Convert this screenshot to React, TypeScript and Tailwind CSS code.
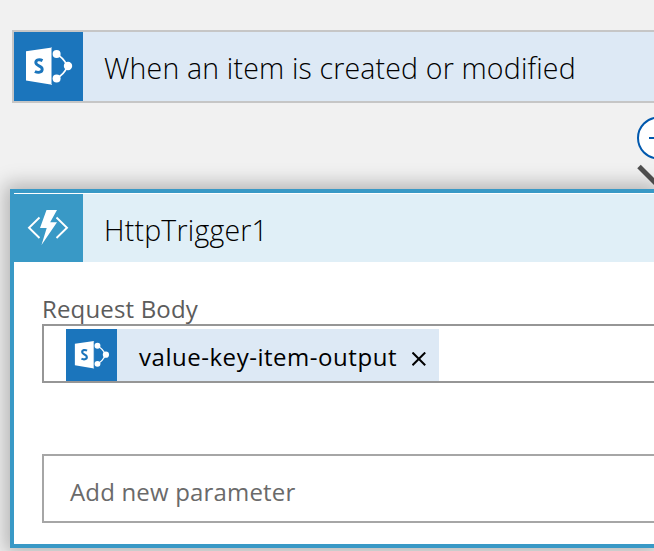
import type { ReactNode } from "react";

function SharePointIcon({ className }: { className: string }) {
  return (
    <svg viewBox="0 0 69 69" className={className}>
      <rect width="69" height="69" fill="#1b75bc" />
      <path d="M42 22 Q49 25 53.500 34 Q50 43 42 46.500" fill="none" stroke="#fff" strokeWidth="1.800" />
      <path d="M12 19.300 L38 15.500 V52.700 L12 48.500 Z" fill="#fff" />
      <path d="M38 16 V52" stroke="#1b75bc" strokeWidth="1" />
      <circle cx="42.600" cy="22" r="4" fill="#fff" />
      <circle cx="54" cy="34" r="4.200" fill="#fff" />
      <circle cx="42.600" cy="46.500" r="4" fill="#fff" />
      <path
        d="M28.500 28.600 C25.500 27 21.800 27.800 21.800 30.600 C21.800 34.300 28.200 33.300 28.200 37.200 C28.200 40.600 23.800 41 20.900 39.400"
        fill="none"
        stroke="#1b75bc"
        strokeWidth="2.900"
      />
    </svg>
  );
}

function FunctionIcon() {
  return (
    <svg viewBox="0 0 69 68" className="h-[68px] w-[69px] shrink-0">
      <rect width="69" height="68" fill="#3999c6" />
      <path d="M25.500 23.500 L15 33.700 L25.500 44 M42.500 23.500 L53 33.700 L42.500 44" fill="none" stroke="#fff" strokeWidth="1.900" />
      <path d="M32.500 16 H43 L36.200 28.300 H43 L27.500 51 L32.700 34 H26 Z" fill="#fff" />
    </svg>
  );
}

function Field({ className, children }: { className: string; children: ReactNode }) {
  return <div className={`ml-7 flex border-2 border-r-0 ${className}`}>{children}</div>;
}

export default function App() {
  return (
    <div className="flex h-[551px] w-[654px] flex-col overflow-hidden bg-[#f1f1f1] pt-[30px] font-['Open_Sans','Noto_Sans',sans-serif]">
      <div className="ml-3 flex h-[73px] shrink-0 border-2 border-r-0 border-[#c6c6c6] bg-[#dde9f5]">
        <SharePointIcon className="h-[69px] w-[69px] shrink-0" />
        <span className="ml-[21px] pt-4 text-[28.500px] leading-[40px] font-light tracking-[0.170px] whitespace-nowrap text-black">
          When an item is created or modified
        </span>
      </div>

      <div className="flex h-[86px] shrink-0 justify-end">
        <svg viewBox="0 0 20 86" className="h-[86px] w-5">
          <circle cx="24.500" cy="35" r="20.500" fill="#fff" stroke="#0058ad" strokeWidth="2" />
          <path d="M15 35 H34" stroke="#0058ad" strokeWidth="2" />
          <path d="M5 63.500 L24 82.500" stroke="#505050" strokeWidth="5" />
        </svg>
      </div>

      <div className="ml-2.5 h-[359px] shrink-0 border-4 border-r-0 border-[#3999c6] bg-white shadow-[0_0_18px_5px_rgba(0,0,0,0.260)]">
        <div className="mt-px flex h-[68px] bg-[#e0eff7]">
          <FunctionIcon />
          <span className="ml-[21px] pt-4 text-[28.500px] leading-[40px] font-light tracking-[0.200px] whitespace-nowrap text-black">
            HttpTrigger1
          </span>
        </div>
        <div className="ml-7 h-[62px] pt-[30px] text-[24px] leading-[34px] tracking-[0.160px] whitespace-nowrap text-[#5c5c5c]">
          Request Body
        </div>
        <Field className="h-[59px] border-[#969696] pt-[3px] pl-[22px]">
          <div className="flex h-[52px] w-[373px] bg-[#dde9f5]">
            <SharePointIcon className="h-[52px] w-[51px] shrink-0 bg-[#1b75bc]" />
            <span className="ml-[22px] w-[273px] shrink-0 pt-[11px] text-[24px] leading-[34px] tracking-[0.530px] whitespace-nowrap text-black">
              value-key-item-output
            </span>
            <svg viewBox="0 0 14 14" className="mt-[23px] h-3.5 w-3.5 shrink-0">
              <path d="M.5 .5 L13.200 13.200 M13.200 .5 L.5 13.200" stroke="#000" strokeWidth="2" />
            </svg>
          </div>
        </Field>
        <Field className="mt-[71px] h-[69px] border-[#a6a6a6] pt-[19px] pl-[26px]">
          <span className="text-[24px] leading-[34px] tracking-[0.170px] whitespace-nowrap text-[#6a6a6a]">
            Add new parameter
          </span>
        </Field>
      </div>
    </div>
  );
}
